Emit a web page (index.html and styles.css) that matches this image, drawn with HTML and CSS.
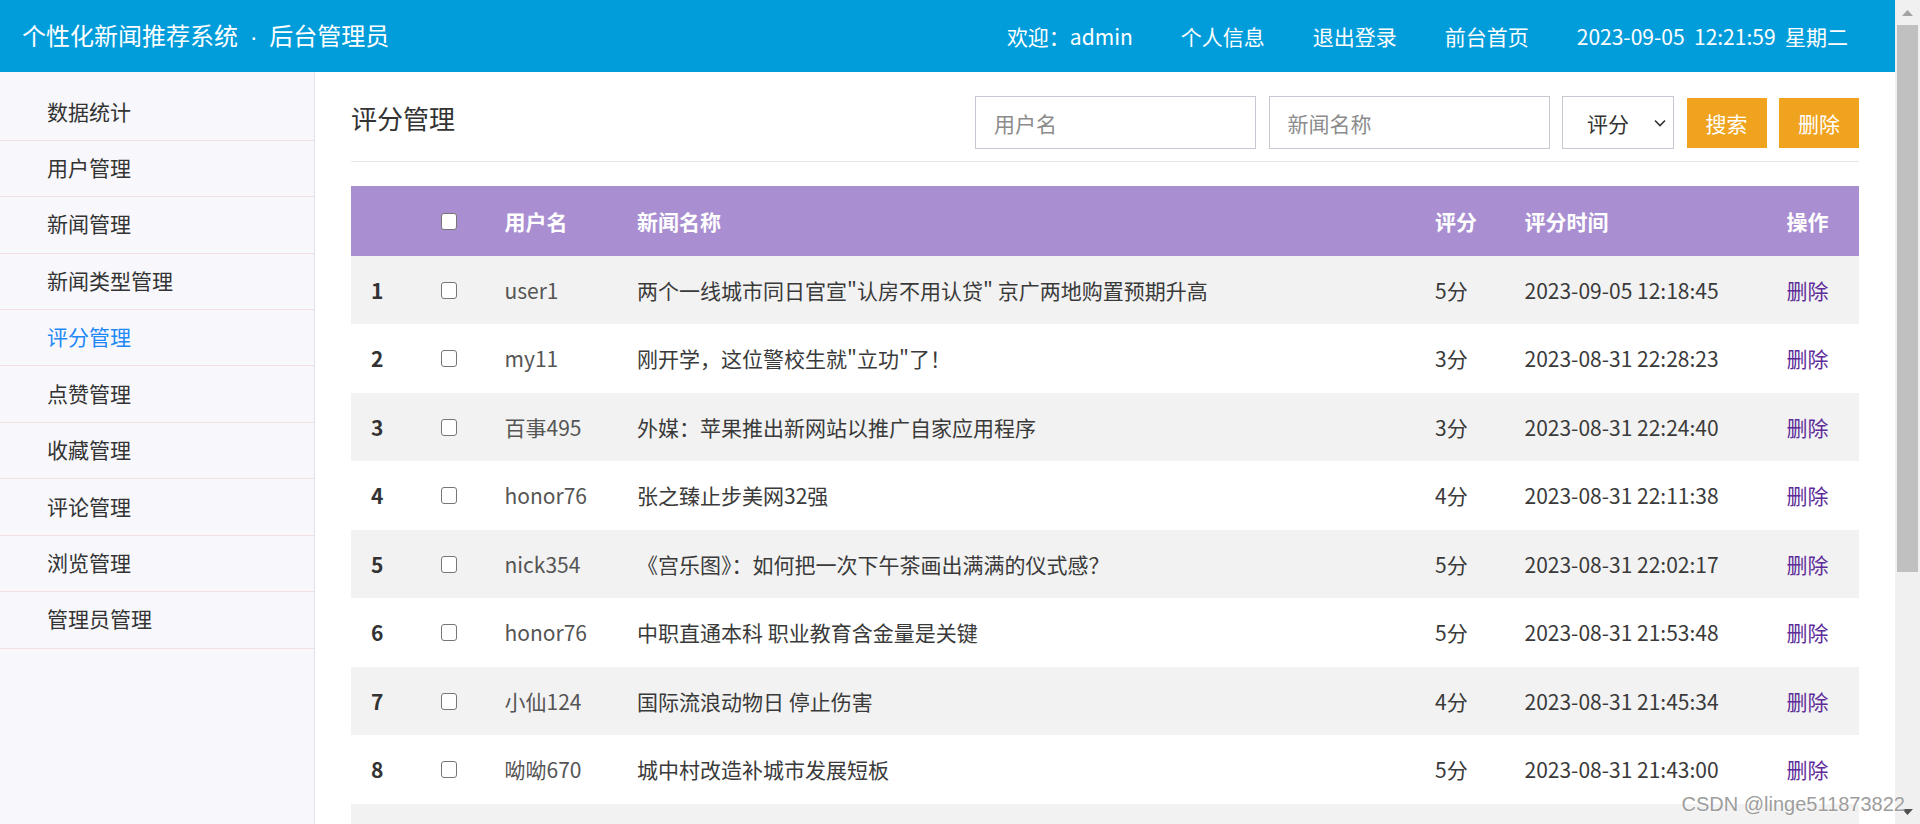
FILE: index.html
```html
<!DOCTYPE html>
<html lang="zh-CN">
<head>
<meta charset="utf-8">
<title>评分管理</title>
<link rel="stylesheet" href="styles.css">
</head>
<body>
<div class="app">
  <header class="topbar">
    <div class="brand">个性化新闻推荐系统<span class="sep"> · </span>后台管理员</div>
    <nav class="topnav">
      <span>欢迎：admin</span>
      <a href="#">个人信息</a>
      <a href="#">退出登录</a>
      <a href="#">前台首页</a>
      <span class="clock">2023-09-05&nbsp; 12:21:59&nbsp; 星期二</span>
    </nav>
  </header>
  <div class="body-row">
    <aside class="sidebar">
      <ul class="menu">
        <li>数据统计</li>
        <li>用户管理</li>
        <li>新闻管理</li>
        <li>新闻类型管理</li>
        <li class="active">评分管理</li>
        <li>点赞管理</li>
        <li>收藏管理</li>
        <li>评论管理</li>
        <li>浏览管理</li>
        <li>管理员管理</li>
      </ul>
    </aside>
    <main class="main">
      <div class="toolbar">
        <h2 class="page-title">评分管理</h2>
        <div class="filters">
          <input class="field" type="text" placeholder="用户名">
          <input class="field" type="text" placeholder="新闻名称">
          <div class="select"><span>评分</span><svg class="chev" width="12" height="8" viewBox="0 0 12 8"><path d="M1 1.5 L6 6.5 L11 1.5" fill="none" stroke="#333" stroke-width="1.6"/></svg></div>
          <button class="btn" type="button">搜索</button>
          <button class="btn" type="button">删除</button>
        </div>
      </div>
      <table class="grid">
        <colgroup>
          <col class="c-no"><col class="c-chk"><col class="c-user"><col class="c-title"><col class="c-score"><col class="c-time"><col class="c-op">
        </colgroup>
        <thead>
          <tr>
            <th></th>
            <th><input class="chk" type="checkbox"></th>
            <th>用户名</th>
            <th>新闻名称</th>
            <th>评分</th>
            <th>评分时间</th>
            <th>操作</th>
          </tr>
        </thead>
        <tbody>
          <tr><td class="no">1</td><td><input class="chk" type="checkbox"></td><td class="user">user1</td><td>两个一线城市同日官宣"认房不用认贷" 京广两地购置预期升高</td><td>5分</td><td>2023-09-05 12:18:45</td><td><a class="del" href="#">删除</a></td></tr>
          <tr><td class="no">2</td><td><input class="chk" type="checkbox"></td><td class="user">my11</td><td>刚开学，这位警校生就"立功"了！</td><td>3分</td><td>2023-08-31 22:28:23</td><td><a class="del" href="#">删除</a></td></tr>
          <tr><td class="no">3</td><td><input class="chk" type="checkbox"></td><td class="user">百事495</td><td>外媒：苹果推出新网站以推广自家应用程序</td><td>3分</td><td>2023-08-31 22:24:40</td><td><a class="del" href="#">删除</a></td></tr>
          <tr><td class="no">4</td><td><input class="chk" type="checkbox"></td><td class="user">honor76</td><td>张之臻止步美网32强</td><td>4分</td><td>2023-08-31 22:11:38</td><td><a class="del" href="#">删除</a></td></tr>
          <tr><td class="no">5</td><td><input class="chk" type="checkbox"></td><td class="user">nick354</td><td>《宫乐图》：如何把一次下午茶画出满满的仪式感？</td><td>5分</td><td>2023-08-31 22:02:17</td><td><a class="del" href="#">删除</a></td></tr>
          <tr><td class="no">6</td><td><input class="chk" type="checkbox"></td><td class="user">honor76</td><td>中职直通本科 职业教育含金量是关键</td><td>5分</td><td>2023-08-31 21:53:48</td><td><a class="del" href="#">删除</a></td></tr>
          <tr><td class="no">7</td><td><input class="chk" type="checkbox"></td><td class="user">小仙124</td><td>国际流浪动物日 停止伤害</td><td>4分</td><td>2023-08-31 21:45:34</td><td><a class="del" href="#">删除</a></td></tr>
          <tr><td class="no">8</td><td><input class="chk" type="checkbox"></td><td class="user">呦呦670</td><td>城中村改造补城市发展短板</td><td>5分</td><td>2023-08-31 21:43:00</td><td><a class="del" href="#">删除</a></td></tr>
          <tr><td></td><td></td><td></td><td></td><td></td><td></td><td></td></tr>
        </tbody>
      </table>
    </main>
  </div>
</div>
<div class="scrollbar">
  <div class="sb-arrow"><svg width="11" height="6" viewBox="0 0 11 6"><path d="M5.5 0 L11 6 L0 6 Z" fill="#a3a3a3"/></svg></div>
  <div class="sb-thumb"></div>
  <div class="sb-space"></div>
  <div class="sb-arrow"><svg width="11" height="6" viewBox="0 0 11 6"><path d="M0 0 L11 0 L5.5 6 Z" fill="#505050"/></svg></div>
</div>
<div class="watermark">CSDN @linge511873822</div>
</body>
</html>
```
FILE: styles.css
```css
* { box-sizing: border-box; }
html, body {
  margin: 0;
  height: 824px;
  overflow: hidden;
}
body {
  display: flex;
  font-family: "Noto Sans CJK SC", "Noto Sans", sans-serif;
  color: #333;
  background: #fff;
  position: relative;
}
.app {
  flex: 1;
  min-width: 0;
  display: flex;
  flex-direction: column;
}
.topbar {
  height: 72px;
  flex: none;
  background: #019ddb;
  color: #fff;
  display: flex;
  align-items: center;
  justify-content: space-between;
  padding: 0 47px 0 22px;
}
.brand {
  font-size: 24px;
  line-height: 1;
  white-space: pre;
}
.sep {
  font-family: "Liberation Sans", Arial, sans-serif;
  font-size: 24px;
  padding: 0 5px;
}
.topnav {
  display: flex;
  gap: 48px;
  font-size: 21px;
  line-height: 1;
}
.topnav a {
  color: #fff;
  text-decoration: none;
}
.body-row {
  flex: 1;
  min-height: 0;
  display: flex;
}
.sidebar {
  width: 315px;
  flex: none;
  background: #f8f8fc;
  border-right: 1px solid #e2e2e8;
  padding-top: 12.3px;
}
.menu {
  list-style: none;
  margin: 0;
  padding: 0;
}
.menu li {
  height: 56.44px;
  border-bottom: 1px solid #f3dfe2;
  display: flex;
  align-items: center;
  padding: 0 0 3px 47px;
  font-size: 21px;
  color: #333;
}
.menu li.active {
  color: #1e88f5;
}
.main {
  flex: 1;
  min-width: 0;
  padding: 24px 36px 0;
}
.toolbar {
  display: flex;
  align-items: center;
  justify-content: space-between;
  padding-bottom: 12px;
  border-bottom: 1px solid #e8e8e8;
}
.page-title {
  margin: 0 0 10px;
  font-size: 26px;
  font-weight: normal;
  color: #333;
  line-height: 1;
}
.filters {
  display: flex;
  align-items: center;
  gap: 12.5px;
}
.field {
  width: 281px;
  height: 53px;
  border: 1px solid #c8c8d2;
  padding: 0 18px;
  font-family: "Noto Sans CJK SC", sans-serif;
  font-size: 21px;
  color: #333;
  outline: none;
  background: #fff;
}
.field::placeholder {
  color: #8c8c8c;
}
.select {
  width: 112px;
  height: 53px;
  border: 1px solid #c8c8d2;
  display: flex;
  align-items: center;
  justify-content: space-between;
  padding: 0 7px 0 24px;
  font-size: 21px;
  color: #333;
}
.btn {
  width: 80px;
  height: 50px;
  border: 0;
  padding: 0;
  background: #f0a31e;
  color: #fff;
  font-family: "Noto Sans CJK SC", sans-serif;
  font-size: 21px;
}
.grid {
  width: 100%;
  margin-top: 24px;
  border-collapse: collapse;
  table-layout: fixed;
  font-size: 21px;
}
.c-no { width: 70px; }
.c-chk { width: 63.5px; }
.c-user { width: 132.5px; }
.c-title { width: 798px; }
.c-score { width: 89.5px; }
.c-time { width: 262px; }
.c-op { width: 92.5px; }
.grid th {
  height: 69.7px;
  background: #a98fd1;
  color: #fff;
  font-weight: bold;
  text-align: left;
  padding: 0 0 0 20px;
  vertical-align: middle;
}
.grid td {
  height: 68.5px;
  padding: 0 0 0 20px;
  vertical-align: middle;
  color: #3a3a3a;
  white-space: nowrap;
  overflow: hidden;
}
.grid tbody tr:nth-child(odd) {
  background: #f2f2f2;
}
.grid td.no {
  font-weight: bold;
  color: #333;
}
.grid td.user {
  color: #555;
}
.chk {
  -webkit-appearance: none;
  appearance: none;
  display: inline-block;
  width: 16px;
  height: 17px;
  margin: 0;
  border: 1.5px solid #767676;
  border-radius: 3px;
  background: #fff;
  vertical-align: middle;
  position: relative;
  top: -3px;
}
.del {
  color: #5d2c99;
  text-decoration: none;
}
.scrollbar {
  width: 25px;
  flex: none;
  height: 824px;
  background: #f0f0f0;
  display: flex;
  flex-direction: column;
  align-items: center;
}
.sb-arrow {
  width: 100%;
  height: 25px;
  flex: none;
  display: flex;
  align-items: center;
  justify-content: center;
}
.sb-thumb {
  width: 21px;
  height: 547px;
  flex: none;
  background: #c0c0c0;
}
.sb-space {
  flex: 1;
}
.watermark {
  position: absolute;
  right: 15px;
  top: 793px;
  font-family: "Liberation Sans", Arial, sans-serif;
  font-size: 20px;
  color: #9d9d9d;
  text-shadow: 0 0 2px #fff, 0 0 1px #fff;
  white-space: nowrap;
}
```
